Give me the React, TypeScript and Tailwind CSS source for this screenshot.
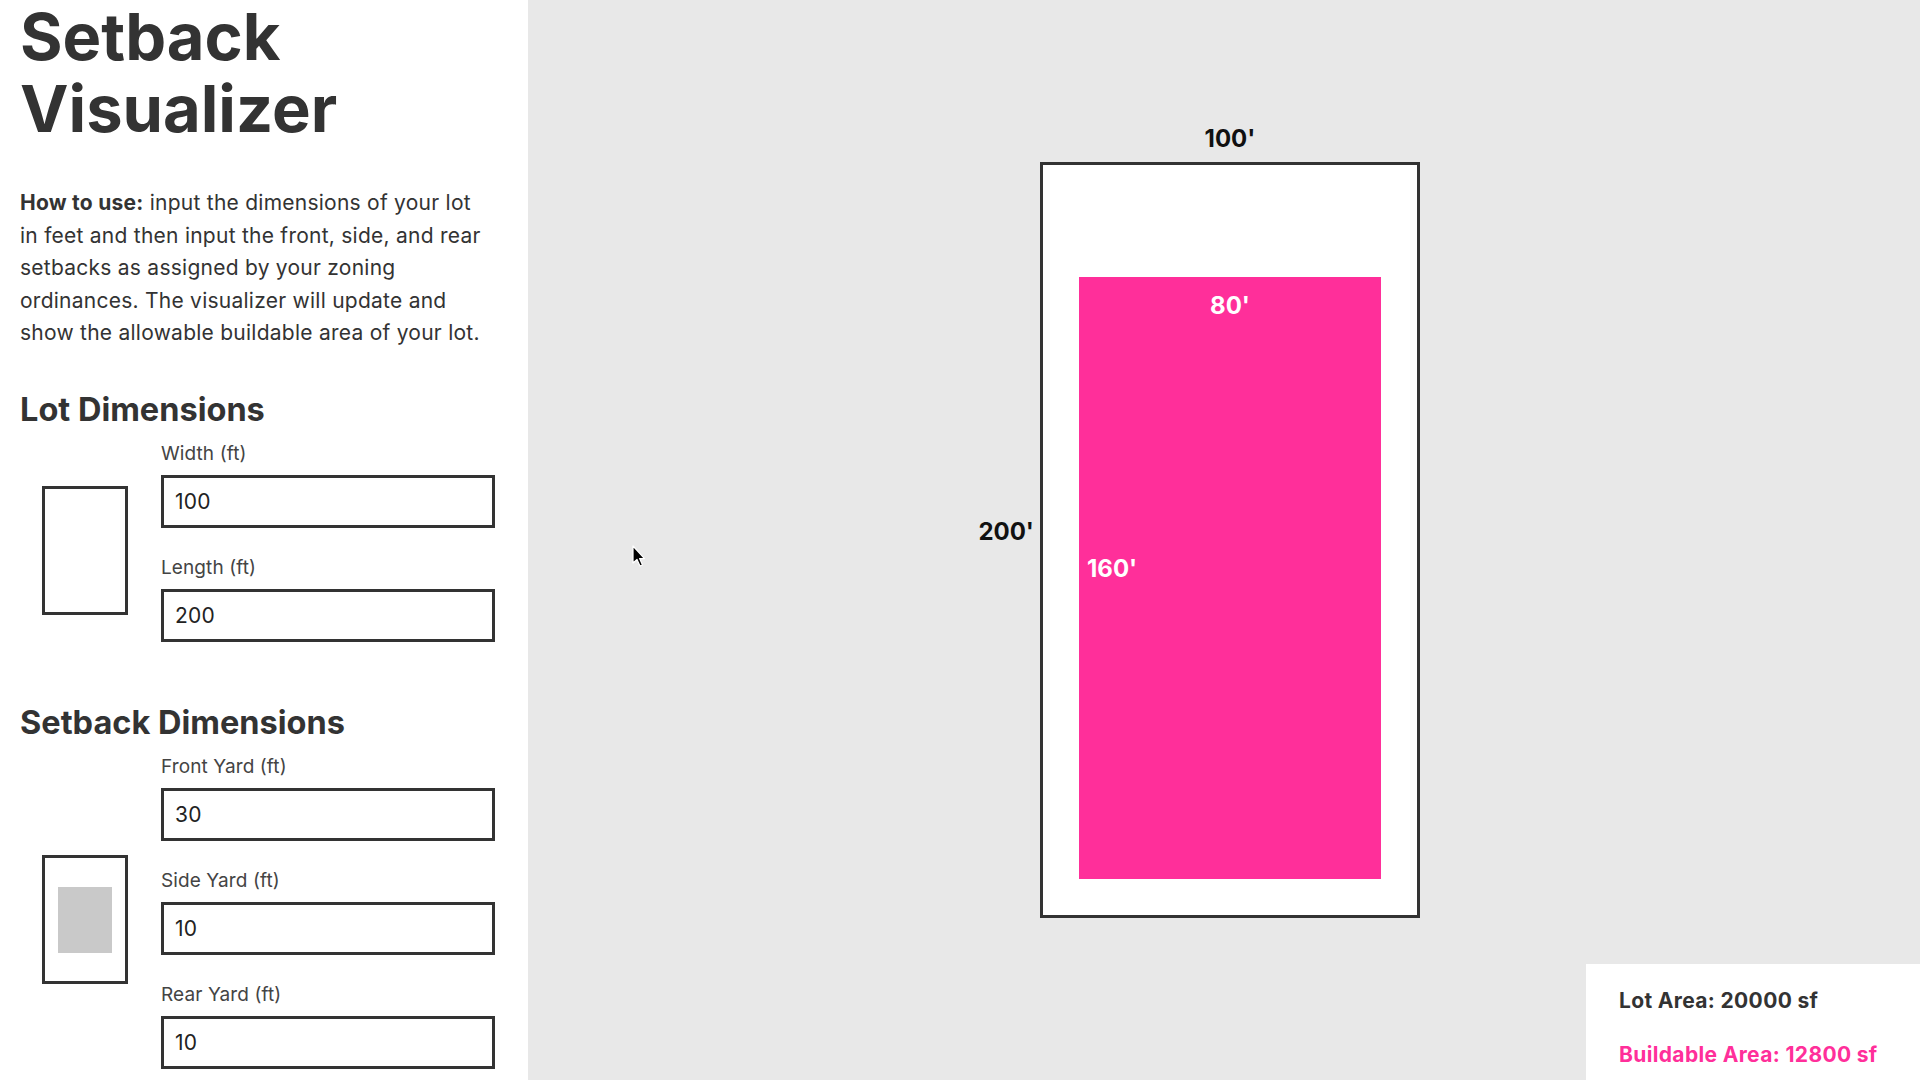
import React from "react";

function Field({ label, value }: { label: string; value: string }) {
  return (
    <div className="mb-[26px]">
      <div className="mb-[8px] text-[19px] leading-[27px] tracking-[0.1px] text-[#444]">{label}</div>
      <input
        type="text"
        readOnly
        value={value}
        className="box-border block h-[53px] w-[334px] border-[3px] border-[#333] bg-white px-[11px] text-[21px] tracking-[0.2px] text-[#222] outline-none"
      />
    </div>
  );
}

function Cursor() {
  return (
    <svg
      className="absolute left-[104px] top-[545px]"
      width="16"
      height="24"
      viewBox="0 0 16 24"
    >
      <path
        d="M1 1 L1 18 L5 14.5 L8 21 L10.5 20 L7.6 13.6 L12.5 13.6 Z"
        fill="#000"
        stroke="#fff"
        strokeWidth="1.2"
        strokeLinejoin="round"
      />
    </svg>
  );
}

export default function App() {
  return (
    <div className="flex h-[1080px] w-[1920px] overflow-hidden font-['Inter',sans-serif] text-[#333]">
      <aside className="h-[1080px] w-[528px] shrink-0 overflow-hidden bg-white px-[20px] pt-[1px]">
        <h1 className="text-[65px] font-bold leading-[72px]">
          Setback
          <br />
          Visualizer
        </h1>
        <p className="mt-[42px] w-[468px] text-[21px] leading-[32.5px] tracking-[0.25px]">
          <b className="font-bold">How to use:</b> input the dimensions of your lot in feet and then input the front,
          side, and rear setbacks as assigned by your zoning ordinances. The visualizer will update and show the
          allowable buildable area of your lot.
        </p>

        <h2 className="mt-[40px] mb-[10px] text-[32.5px] font-bold leading-[40px]">Lot Dimensions</h2>
        <div className="flex items-center">
          <div className="mb-[7px] ml-[22px] mr-[33px] box-border h-[129px] w-[86px] border-[3px] border-[#333] bg-white" />
          <div className="flex flex-col">
            <Field label="Width (ft)" value="100" />
            <Field label="Length (ft)" value="200" />
          </div>
        </div>

        <h2 className="mt-[35px] mb-[10px] text-[32.5px] font-bold leading-[40px]">Setback Dimensions</h2>
        <div className="flex items-center">
          <div className="mb-[8px] ml-[22px] mr-[33px] box-border flex h-[129px] w-[86px] items-center justify-center border-[3px] border-[#333] bg-white">
            <div className="h-[66px] w-[54px] bg-[#c9c9c9]" />
          </div>
          <div className="flex flex-col">
            <Field label="Front Yard (ft)" value="30" />
            <Field label="Side Yard (ft)" value="10" />
            <Field label="Rear Yard (ft)" value="10" />
          </div>
        </div>
      </aside>

      <main className="relative flex flex-1 items-center justify-center bg-[#e8e8e8]">
        <Cursor />
        <div className="relative ml-[12px]">
          <div className="absolute bottom-full left-0 right-0 mb-[7px] text-center text-[24px] font-bold leading-[32px] text-[#111]">
            100'
          </div>
          <div className="absolute right-full top-[354px] mr-[6px] whitespace-nowrap text-[24px] font-bold leading-[32px] text-[#111]">
            200'
          </div>
          <div className="box-border h-[756px] w-[380px] border-[3px] border-[#333] bg-white px-[36px] pt-[112px] pb-[36px]">
            <div className="relative h-full w-full bg-[#ff2f9a]">
              <div className="pt-[13px] text-center text-[24px] font-bold leading-[32px] text-white">80'</div>
              <div className="absolute left-[8px] top-[276px] text-[24px] font-bold leading-[32px] text-white">
                160'
              </div>
            </div>
          </div>
        </div>

        <div className="absolute bottom-0 right-0 box-border h-[116px] w-[334px] bg-white pl-[33px] pt-[23px]">
          <div className="text-[21px] font-bold leading-[28px] tracking-[0.35px] text-[#333]">Lot Area: 20000 sf</div>
          <div className="mt-[26px] text-[21px] font-bold leading-[28px] tracking-[0.35px] text-[#ff2f9a]">
            Buildable Area: 12800 sf
          </div>
        </div>
      </main>
    </div>
  );
}
